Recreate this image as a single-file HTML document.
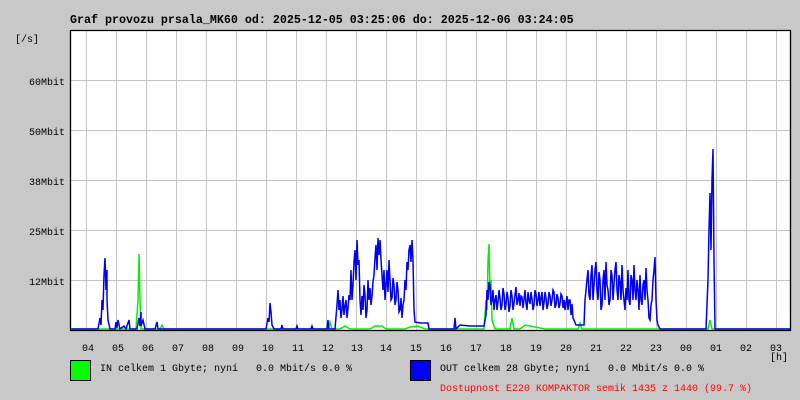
<!DOCTYPE html>
<html><head><meta charset="utf-8"><style>
body{margin:0;width:800px;height:400px;background:#c8c8c8;overflow:hidden;font-family:"Liberation Mono","DejaVu Sans Mono",monospace;}
</style></head><body>
<svg width="800" height="400" xmlns="http://www.w3.org/2000/svg" style="position:absolute;left:0;top:0;font-family:'Liberation Mono',monospace;font-size:10px">
<rect x="70" y="30" width="720" height="300" fill="#fff"/>
<g stroke="#c4c4c4" stroke-width="1">
<path d="M86.5 30V330M116.5 30V330M146.5 30V330M176.5 30V330M206.5 30V330M236.5 30V330M266.5 30V330M296.5 30V330M326.5 30V330M356.5 30V330M386.5 30V330M416.5 30V330M446.5 30V330M476.5 30V330M506.5 30V330M536.5 30V330M566.5 30V330M596.5 30V330M626.5 30V330M656.5 30V330M686.5 30V330M716.5 30V330M746.5 30V330M776.5 30V330"/>
<path d="M70 80.5H790M70 130.5H790M70 180.5H790M70 230.5H790M70 280.5H790"/>
</g>
<polyline fill="none" stroke="#00f000" stroke-width="1.5" points="70,329 136,329 138,300 139,254 140,300 141,329 160,329 162,325 164,329 328,329 330,322 332,329 340,329 345,326 350,329 370,329 375,326 382,326 386,329 405,329 410,327 418,326 425,329 484,329 486,300 487,310 488,262 489,244 490,290 491,280 492,320 495,329 510,329 512,318 514,329 520,329 525,325 545,329 578,329 580,323 582,329 708,329 710,320 712,329 790,329"/>
<polyline fill="none" stroke="#0000f0" stroke-width="1.5" points="70,329 98,329 100,318 101,325 102,300 103,310 104,275 105,258 106,290 107,270 107,300 108,320 110,329 115,329 116,322 117,328 118,320 120,329 124,326 126,329 129,320 130,329 137,329 139,318 140,326 141,312 141,326 143,320 145,329 155,329 157,322 158,329 266,329 268,318 269,322 270,303 271,312 272,325 274,329 281,329 282,325 283,329 296,329 297,326 298,329 311,329 312,326 313,329 327,329 328,320 329,329 335,329 337,305 338,290 339,310 340,300 341,318 342,310 343,296 344,315 345,306 346,300 347,318 348,308 349,295 350,300 351,270 352,300 353,285 354,262 355,250 356,280 357,240 358,265 359,260 360,300 361,315 362,296 363,310 364,285 365,295 366,318 367,310 368,280 369,300 370,288 371,305 372,296 373,282 374,275 375,258 376,245 377,270 378,238 379,255 380,240 381,260 382,275 383,290 384,270 385,300 386,285 387,270 388,292 389,260 390,280 391,300 392,298 393,278 394,285 395,305 396,300 397,282 398,290 399,312 400,310 401,298 402,318 403,305 404,300 405,280 406,290 407,262 408,270 409,250 410,245 411,262 412,240 413,260 414,310 415,322 420,323 428,323 429,329 454,329 455,318 456,329 460,325 470,326 484,326 486,315 487,290 488,300 489,282 490,285 491,305 492,300 493,290 494,310 495,300 496,295 497,310 498,302 499,290 500,298 501,310 502,305 503,288 504,294 505,310 506,304 507,292 508,298 509,312 510,306 511,290 512,296 513,310 514,303 515,295 516,287 517,305 518,300 519,293 520,306 521,296 522,297 523,308 524,300 525,290 526,303 527,310 528,292 529,300 530,304 531,292 532,299 533,310 534,305 535,290 536,294 537,306 538,300 539,292 540,306 541,298 542,292 543,310 544,303 545,292 546,298 547,309 548,304 549,292 550,296 551,306 552,300 553,290 554,292 555,308 556,305 557,294 558,298 559,308 560,304 561,294 562,296 563,308 564,300 565,310 566,303 567,296 568,310 569,300 570,300 571,315 572,304 573,318 574,320 576,325 584,325 585,300 586,290 587,280 588,270 589,295 590,300 591,275 592,265 593,300 594,285 595,270 596,262 597,290 598,300 599,272 600,280 601,310 602,305 603,280 604,270 605,300 606,262 607,285 608,290 609,305 610,300 611,270 612,275 613,300 614,285 615,270 616,262 617,290 618,300 619,275 620,282 621,300 622,265 623,290 624,300 625,310 626,288 627,300 628,270 629,300 630,305 631,275 632,280 633,300 634,265 635,290 636,300 637,280 638,290 639,310 640,275 641,300 642,305 643,285 644,280 645,300 646,268 647,290 648,300 649,318 650,320 651,305 652,300 653,280 654,270 655,257 656,300 657,320 658,325 660,329 706,329 708,280 709,230 710,193 711,250 712,180 713,149 714,260 715,329 790,329"/>
<path d="M70.5 30V330.5H790.5V30.5H70.5" fill="none" stroke="#000" stroke-width="1.3"/>
<text x="70" y="23" font-weight="bold" font-size="11.67">Graf provozu prsala_MK60 od: 2025-12-05 03:25:06 do: 2025-12-06 03:24:05</text>
<text x="15" y="42">[/s]</text>
<g text-anchor="end">
<text x="65" y="85">60Mbit</text><text x="65" y="135">50Mbit</text><text x="65" y="185">38Mbit</text><text x="65" y="235">25Mbit</text><text x="65" y="285">12Mbit</text>
</g>
<g text-anchor="middle">
<text x="88" y="351">04</text><text x="118" y="351">05</text><text x="148" y="351">06</text><text x="178" y="351">07</text><text x="208" y="351">08</text><text x="238" y="351">09</text><text x="268" y="351">10</text><text x="298" y="351">11</text><text x="328" y="351">12</text><text x="357" y="351">13</text><text x="386" y="351">14</text><text x="416" y="351">15</text><text x="446" y="351">16</text><text x="476" y="351">17</text><text x="506" y="351">18</text><text x="536" y="351">19</text><text x="566" y="351">20</text><text x="596" y="351">21</text><text x="626" y="351">22</text><text x="656" y="351">23</text><text x="686" y="351">00</text><text x="716" y="351">01</text><text x="746" y="351">02</text><text x="776" y="351">03</text>
<text x="779" y="360">[h]</text>
</g>
<rect x="70.5" y="360.5" width="20" height="20" fill="#00ff00" stroke="#000"/>
<rect x="410.5" y="360.5" width="20" height="20" fill="#0000ff" stroke="#000"/>
<text x="100" y="371" xml:space="preserve">IN celkem 1 Gbyte; nyní   0.0 Mbit/s 0.0 %</text>
<text x="440" y="371" xml:space="preserve">OUT celkem 28 Gbyte; nyní   0.0 Mbit/s 0.0 %</text>
<text x="440" y="391" fill="#ff0000">Dostupnost E220 KOMPAKTOR semik 1435 z 1440 (99.7 %)</text>
</svg>
</body></html>
